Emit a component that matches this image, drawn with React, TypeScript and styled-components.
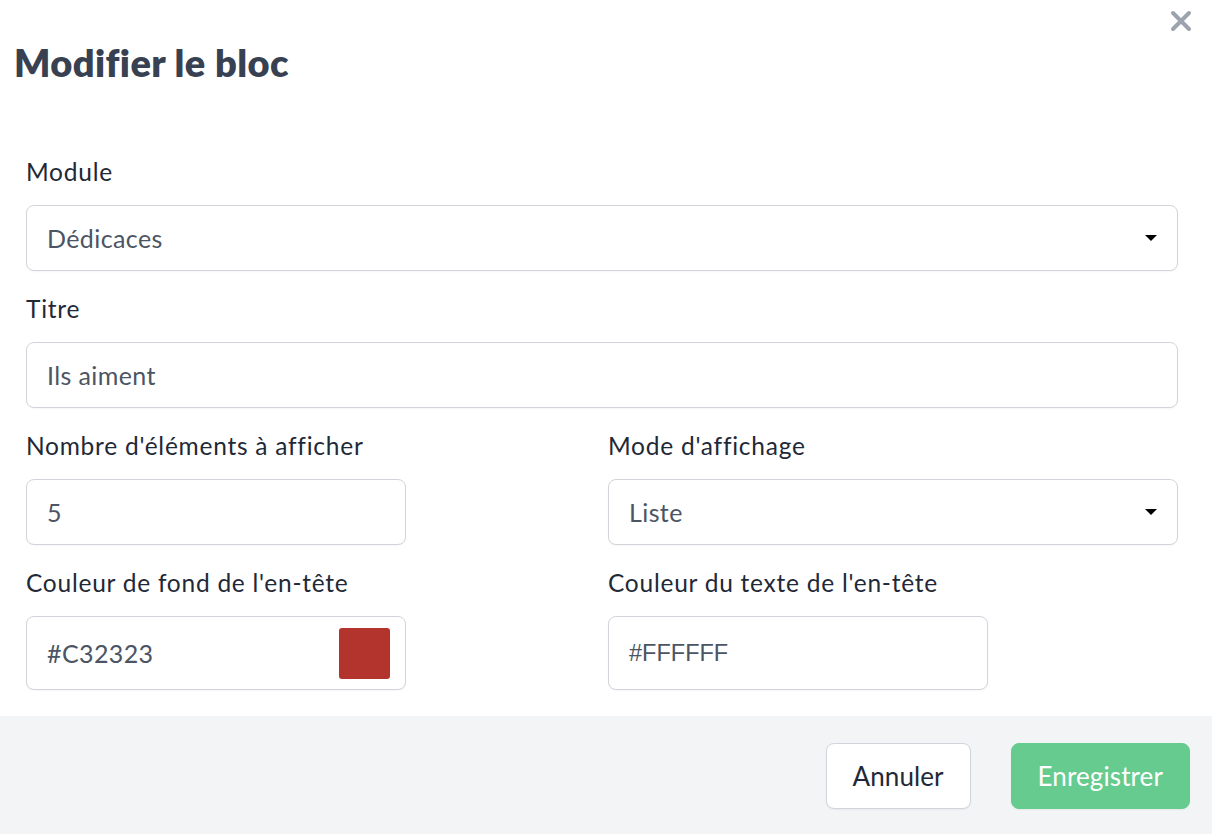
import React from "react";
import styled, { createGlobalStyle } from "styled-components";

const Global = createGlobalStyle`
  html, body { margin: 0; padding: 0; background: #ffffff; }
  body { font-family: "Lato", "Noto Sans", sans-serif; -webkit-font-smoothing: antialiased; }
  * { box-sizing: border-box; }
`;

const Dialog = styled.div`
  width: 1212px;
  height: 834px;
  background: #ffffff;
  display: flex;
  flex-direction: column;
  position: relative;
`;

const CloseButton = styled.button`
  position: absolute;
  top: 8px;
  right: 18px;
  width: 26px;
  height: 26px;
  padding: 0;
  border: none;
  background: transparent;
  display: flex;
  align-items: center;
  justify-content: center;
  cursor: pointer;
`;

const Body = styled.div`
  flex: 1;
  padding: 42px 34px 25px 26px;
  display: flex;
  flex-direction: column;
`;

const Title = styled.h1`
  margin: 0 0 74px -12px;
  font-size: 38px;
  line-height: 40px;
  font-weight: 800;
  color: #374151;
  letter-spacing: 0.4px;
`;

const Form = styled.div`
  display: flex;
  flex-direction: column;
  gap: 22px;
`;

const Row = styled.div`
  display: grid;
  grid-template-columns: 1fr 1fr;
  column-gap: 12px;
`;

const Field = styled.div`
  display: flex;
  flex-direction: column;
  gap: 17px;
`;

const Label = styled.label`
  font-size: 24.5px;
  line-height: 32px;
  letter-spacing: 0.75px;
  color: #1f2937;
`;

const Box = styled.div<{ $tall?: boolean; $narrow?: boolean }>`
  height: ${(p) => (p.$tall ? "74px" : "66px")};
  width: ${(p) => (p.$narrow ? "380px" : "100%")};
  border: 1px solid #d1d5db;
  border-radius: 8px;
  background: #ffffff;
  box-shadow: 0 1px 2px rgba(0, 0, 0, 0.04);
  display: flex;
  align-items: center;
  padding: 0 15px 0 20px;
`;

const Value = styled.span<{ $mono?: boolean }>`
  flex: 1;
  font-size: ${(p) => (p.$mono ? "23.5px" : "25px")};
  letter-spacing: ${(p) => (p.$mono ? "0" : "0.4px")};
  font-family: ${(p) => (p.$mono ? `"Liberation Sans", Arial, sans-serif` : "inherit")};
  color: #4b5563;
  white-space: nowrap;
`;

const Caret = styled.span`
  width: 0;
  height: 0;
  border-left: 6px solid transparent;
  border-right: 6px solid transparent;
  border-top: 6px solid #000000;
  margin-right: 5px;
`;

const Swatch = styled.span<{ $color: string }>`
  width: 51px;
  height: 51px;
  border-radius: 3px;
  background: ${(p) => p.$color};
`;

const Footer = styled.div`
  height: 118px;
  background: #f3f4f6;
  display: flex;
  justify-content: flex-end;
  align-items: flex-start;
  padding: 27px 22px 0 0;
  gap: 40px;
`;

const Button = styled.button<{ $primary?: boolean }>`
  height: 66px;
  padding: 0 ${(p) => (p.$primary ? "26px" : "26px")};
  border-radius: 8px;
  font-family: inherit;
  font-size: 26px;
  letter-spacing: 0.1px;
  cursor: pointer;
  border: 1px solid ${(p) => (p.$primary ? "#66cb8e" : "#d1d5db")};
  background: ${(p) => (p.$primary ? "#66cb8e" : "#ffffff")};
  color: ${(p) => (p.$primary ? "#ffffff" : "#1f2937")};
  box-shadow: 0 1px 2px rgba(0, 0, 0, 0.05);
`;

export default function App() {
  return (
    <>
      <Global />
      <Dialog>
        <CloseButton aria-label="Fermer">
          <svg width="22" height="22" viewBox="0 0 22 22">
            <path d="M3 3 L19 19 M19 3 L3 19" stroke="#9ca3af" strokeWidth="4" strokeLinecap="round" />
          </svg>
        </CloseButton>
        <Body>
          <Title>Modifier le bloc</Title>
          <Form>
            <Field>
              <Label>Module</Label>
              <Box>
                <Value>Dédicaces</Value>
                <Caret />
              </Box>
            </Field>
            <Field>
              <Label>Titre</Label>
              <Box>
                <Value>Ils aiment</Value>
              </Box>
            </Field>
            <Row>
              <Field>
                <Label>Nombre d'éléments à afficher</Label>
                <Box $narrow>
                  <Value>5</Value>
                </Box>
              </Field>
              <Field>
                <Label>Mode d'affichage</Label>
                <Box>
                  <Value>Liste</Value>
                  <Caret />
                </Box>
              </Field>
            </Row>
            <Row>
              <Field>
                <Label>Couleur de fond de l'en-tête</Label>
                <Box $tall $narrow>
                  <Value>#C32323</Value>
                  <Swatch $color="#b3332d" />
                </Box>
              </Field>
              <Field>
                <Label>Couleur du texte de l'en-tête</Label>
                <Box $tall $narrow>
                  <Value $mono>#FFFFFF</Value>
                </Box>
              </Field>
            </Row>
          </Form>
        </Body>
        <Footer>
          <Button>Annuler</Button>
          <Button $primary>Enregistrer</Button>
        </Footer>
      </Dialog>
    </>
  );
}
